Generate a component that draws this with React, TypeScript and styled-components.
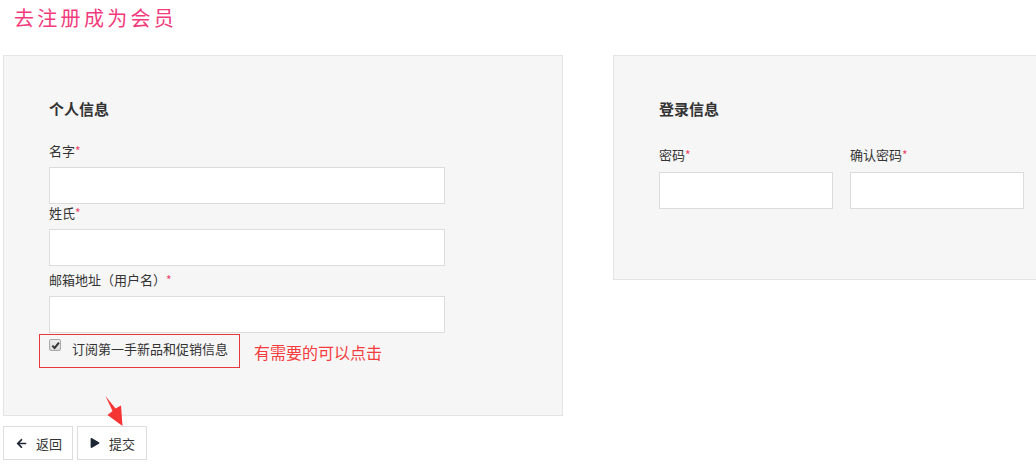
import React from "react";
import styled, { createGlobalStyle } from "styled-components";
import { FaArrowLeft, FaPlay } from "react-icons/fa";

const Global = createGlobalStyle`
  html, body { margin: 0; padding: 0; background: #fff; overflow: hidden; }
  body { font-family: "Noto Sans CJK SC", "Noto Sans", sans-serif; color: #333; }
  * { box-sizing: border-box; }
`;

const Page = styled.div`
  position: relative;
  width: 1036px;
  height: 471px;
  overflow: hidden;
`;

const Title = styled.h1`
  margin: 0;
  padding: 4px 0 0 14px;
  font-size: 20px;
  line-height: 28px;
  font-weight: 400;
  letter-spacing: 3.3px;
  color: #f23a7c;
`;

const Columns = styled.div`
  display: flex;
  align-items: flex-start;
  gap: 50px;
  margin-top: 23px;
  padding-left: 3px;
`;

const Panel = styled.section<{ $h: number; $open?: boolean }>`
  flex: ${(p) => (p.$open ? "1 1 auto" : "0 0 560px")};
  min-width: 0;
  height: ${(p) => p.$h}px;
  background: #f6f6f6;
  border: 1px solid #e4e4e4;
  border-right-width: ${(p) => (p.$open ? 0 : 1)}px;
  padding: 43px 0 0 45px;
`;

const Heading = styled.h3<{ $gap: number }>`
  margin: 0 0 ${(p) => p.$gap}px;
  font-size: 15px;
  line-height: 20px;
  font-weight: 700;
  color: #333;
`;

const Field = styled.div<{ $top?: number; $gap?: number }>`
  display: flex;
  flex-direction: column;
  margin-top: ${(p) => p.$top ?? 0}px;
  gap: ${(p) => p.$gap ?? 7}px;
`;

const Label = styled.label`
  font-size: 13px;
  line-height: 18px;
  color: #333;
`;

const Star = styled.span`
  color: #f0456a;
  font-size: 12px;
`;

const Input = styled.input<{ $w: number }>`
  width: ${(p) => p.$w}px;
  height: 37px;
  border: 1px solid #dcdcdc;
  background: #fff;
  outline: none;
  padding: 0 8px;
  font-size: 13px;
`;

const PasswordGrid = styled.div`
  display: grid;
  grid-template-columns: 174px 174px;
  column-gap: 17px;
`;

const SubscribeRow = styled.div`
  display: flex;
  align-items: center;
  gap: 14px;
  margin-top: 1px;
  margin-left: -10px;
`;

const Highlight = styled.div`
  width: 201px;
  height: 34px;
  border: 1px solid #e8383d;
  display: flex;
  align-items: flex-start;
  padding: 4px 0 0 9px;
  gap: 11px;
`;

const CheckBox = styled.span`
  width: 12px;
  height: 12px;
  border: 1px solid #a8a8a8;
  border-radius: 2px;
  background: linear-gradient(#eeeeee, #d8d8d8);
  display: flex;
  align-items: center;
  justify-content: center;
  flex: none;
`;

const CheckText = styled.span`
  font-size: 13px;
  line-height: 18px;
  margin-top: 1px;
  color: #333;
`;

const Note = styled.span`
  font-size: 16px;
  line-height: 22px;
  color: #f53b3b;
  margin-top: 2px;
`;

const Actions = styled.div`
  display: flex;
  gap: 4px;
  margin-top: 10px;
  padding-left: 3px;
`;

const Button = styled.button`
  width: 70px;
  height: 34px;
  background: #fff;
  border: 1px solid #dddddd;
  display: flex;
  align-items: center;
  padding: 0 0 0 12px;
  gap: 9px;
  font-family: inherit;
  font-size: 13px;
  color: #333;
  cursor: pointer;
  svg { color: #1d2633; flex: none; }
`;

const Arrow = styled.svg`
  position: absolute;
  left: 100px;
  top: 392px;
  width: 30px;
  height: 40px;
`;

export default function App() {
  return (
    <Page>
      <Global />
      <Title>去注册成为会员</Title>
      <Columns>
        <Panel $h={361}>
          <Heading $gap={23}>个人信息</Heading>
          <Field>
            <Label>名字<Star>*</Star></Label>
            <Input $w={396} />
          </Field>
          <Field>
            <Label>姓氏<Star>*</Star></Label>
            <Input $w={396} />
          </Field>
          <Field $top={5}>
            <Label>邮箱地址（用户名）<Star>*</Star></Label>
            <Input $w={396} />
          </Field>
          <SubscribeRow>
            <Highlight>
              <CheckBox>
                <svg width="9" height="9" viewBox="0 0 10 10">
                  <path d="M1.5 5.2 L4 7.8 L8.8 1.8" fill="none" stroke="#333" strokeWidth="2.2" />
                </svg>
              </CheckBox>
              <CheckText>订阅第一手新品和促销信息</CheckText>
            </Highlight>
            <Note>有需要的可以点击</Note>
          </SubscribeRow>
        </Panel>
        <Panel $h={225} $open>
          <Heading $gap={27}>登录信息</Heading>
          <PasswordGrid>
            <Field $gap={8}>
              <Label>密码<Star>*</Star></Label>
              <Input $w={174} type="password" />
            </Field>
            <Field $gap={8}>
              <Label>确认密码<Star>*</Star></Label>
              <Input $w={174} type="password" />
            </Field>
          </PasswordGrid>
        </Panel>
      </Columns>
      <Actions>
        <Button>
          <FaArrowLeft size={11} />
          返回
        </Button>
        <Button>
          <FaPlay size={10} />
          提交
        </Button>
      </Actions>
      <Arrow viewBox="100 392 30 40">
        <polygon
          points="105.5,396 115.5,408.5 121,405.5 122.5,426 107.5,415 112.5,411"
          fill="#f53434"
        />
      </Arrow>
    </Page>
  );
}
